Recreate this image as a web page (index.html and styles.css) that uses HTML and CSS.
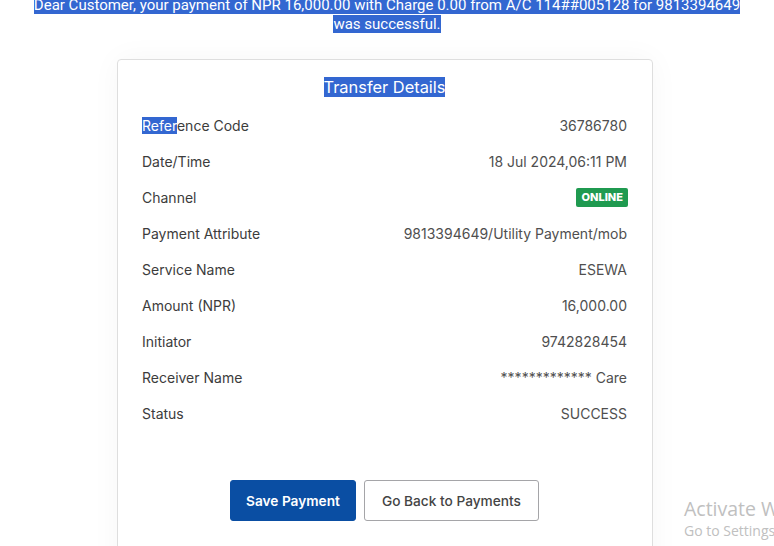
FILE: index.html
```html
<!DOCTYPE html>
<html>
<head>
<meta charset="utf-8">
<link rel="stylesheet" href="styles.css">
</head>
<body>
<p class="msg"><span class="sel">Dear Customer, your payment of NPR 16,000.00 with Charge 0.00 from A/C 114##005128 for 9813394649 was successful.</span></p>
<div class="card">
  <h2 class="title"><span class="sel">Transfer Details</span></h2>
  <div class="rows">
    <div class="row"><span class="label"><span class="sel">Refer</span>ence Code</span><span class="value">36786780</span></div>
    <div class="row"><span class="label">Date/Time</span><span class="value">18 Jul 2024,06:11 PM</span></div>
    <div class="row"><span class="label">Channel</span><span class="badge">ONLINE</span></div>
    <div class="row"><span class="label">Payment Attribute</span><span class="value">9813394649/Utility Payment/mob</span></div>
    <div class="row"><span class="label">Service Name</span><span class="value">ESEWA</span></div>
    <div class="row"><span class="label">Amount (NPR)</span><span class="value">16,000.00</span></div>
    <div class="row"><span class="label">Initiator</span><span class="value">9742828454</span></div>
    <div class="row"><span class="label">Receiver Name</span><span class="value">************* Care</span></div>
    <div class="row"><span class="label">Status</span><span class="value">SUCCESS</span></div>
  </div>
  <div class="actions">
    <button class="btn primary">Save Payment</button>
    <button class="btn outline">Go Back to Payments</button>
  </div>
</div>
<div class="watermark">
  <div class="wm1">Activate Windows</div>
  <div class="wm2">Go to Settings to activate Windows.</div>
</div>
</body>
</html>
```
FILE: styles.css
```css
html, body {
  margin: 0;
  padding: 0;
  background: #fff;
  overflow: hidden;
  height: 546px;
}
body {
  font-family: Inter, "Liberation Sans", sans-serif;
  position: relative;
}
.sel {
  background: #3367d1;
  color: #fff;
}
.msg {
  margin: -4px auto 0;
  width: 716px;
  text-align: center;
  font-family: Roboto, "Liberation Sans", sans-serif;
  font-size: 15px;
  font-weight: 400;
  line-height: 19px;
  color: #fff;
}
.card {
  margin: 25px 0 0 117px;
  width: 536px;
  height: 520px;
  border: 1px solid #dedede;
  border-radius: 4px;
  box-shadow: 0 0 30px rgba(0, 0, 0, 0.04);
  padding: 16px 25px 0 24px;
  box-sizing: border-box;
}
.title {
  margin: 0 0 8px;
  text-align: center;
  font-size: 16.4px;
  font-weight: 400;
  line-height: 23px;
}
.row {
  display: flex;
  justify-content: space-between;
  align-items: center;
  height: 36px;
  font-size: 14px;
}
.label {
  color: #3c3c3c;
}
.value {
  color: #4f4f4f;
}
.badge {
  background: #1f9a50;
  color: #fff;
  font-weight: 800;
  font-size: 11px;
  height: 19px;
  line-height: 19px;
  padding: 0 5px 0 6px;
  margin-right: -1px;
  border-radius: 2px;
}
.actions {
  display: flex;
  justify-content: center;
  gap: 8px;
  margin-top: 49px;
}
.btn {
  height: 41px;
  font-family: Inter, "Liberation Sans", sans-serif;
  font-size: 13.7px;
  border-radius: 3px;
  cursor: pointer;
}
.primary {
  background: #0a4ea3;
  color: #fff;
  border: 1px solid #0a4ea3;
  font-weight: 600;
  padding: 0 15px;
}
.outline {
  background: #fff;
  color: #444;
  border: 1px solid #a5a5a8;
  font-weight: 500;
  padding: 0 17px;
}
.watermark {
  position: absolute;
  left: 684px;
  top: 496px;
  white-space: nowrap;
  color: #c0c0c0;
  font-family: "Open Sans", "Noto Sans", sans-serif;
}
.wm1 {
  font-size: 19.5px;
  line-height: 25px;
}
.wm2 {
  font-size: 14px;
  line-height: 20px;
}
```
